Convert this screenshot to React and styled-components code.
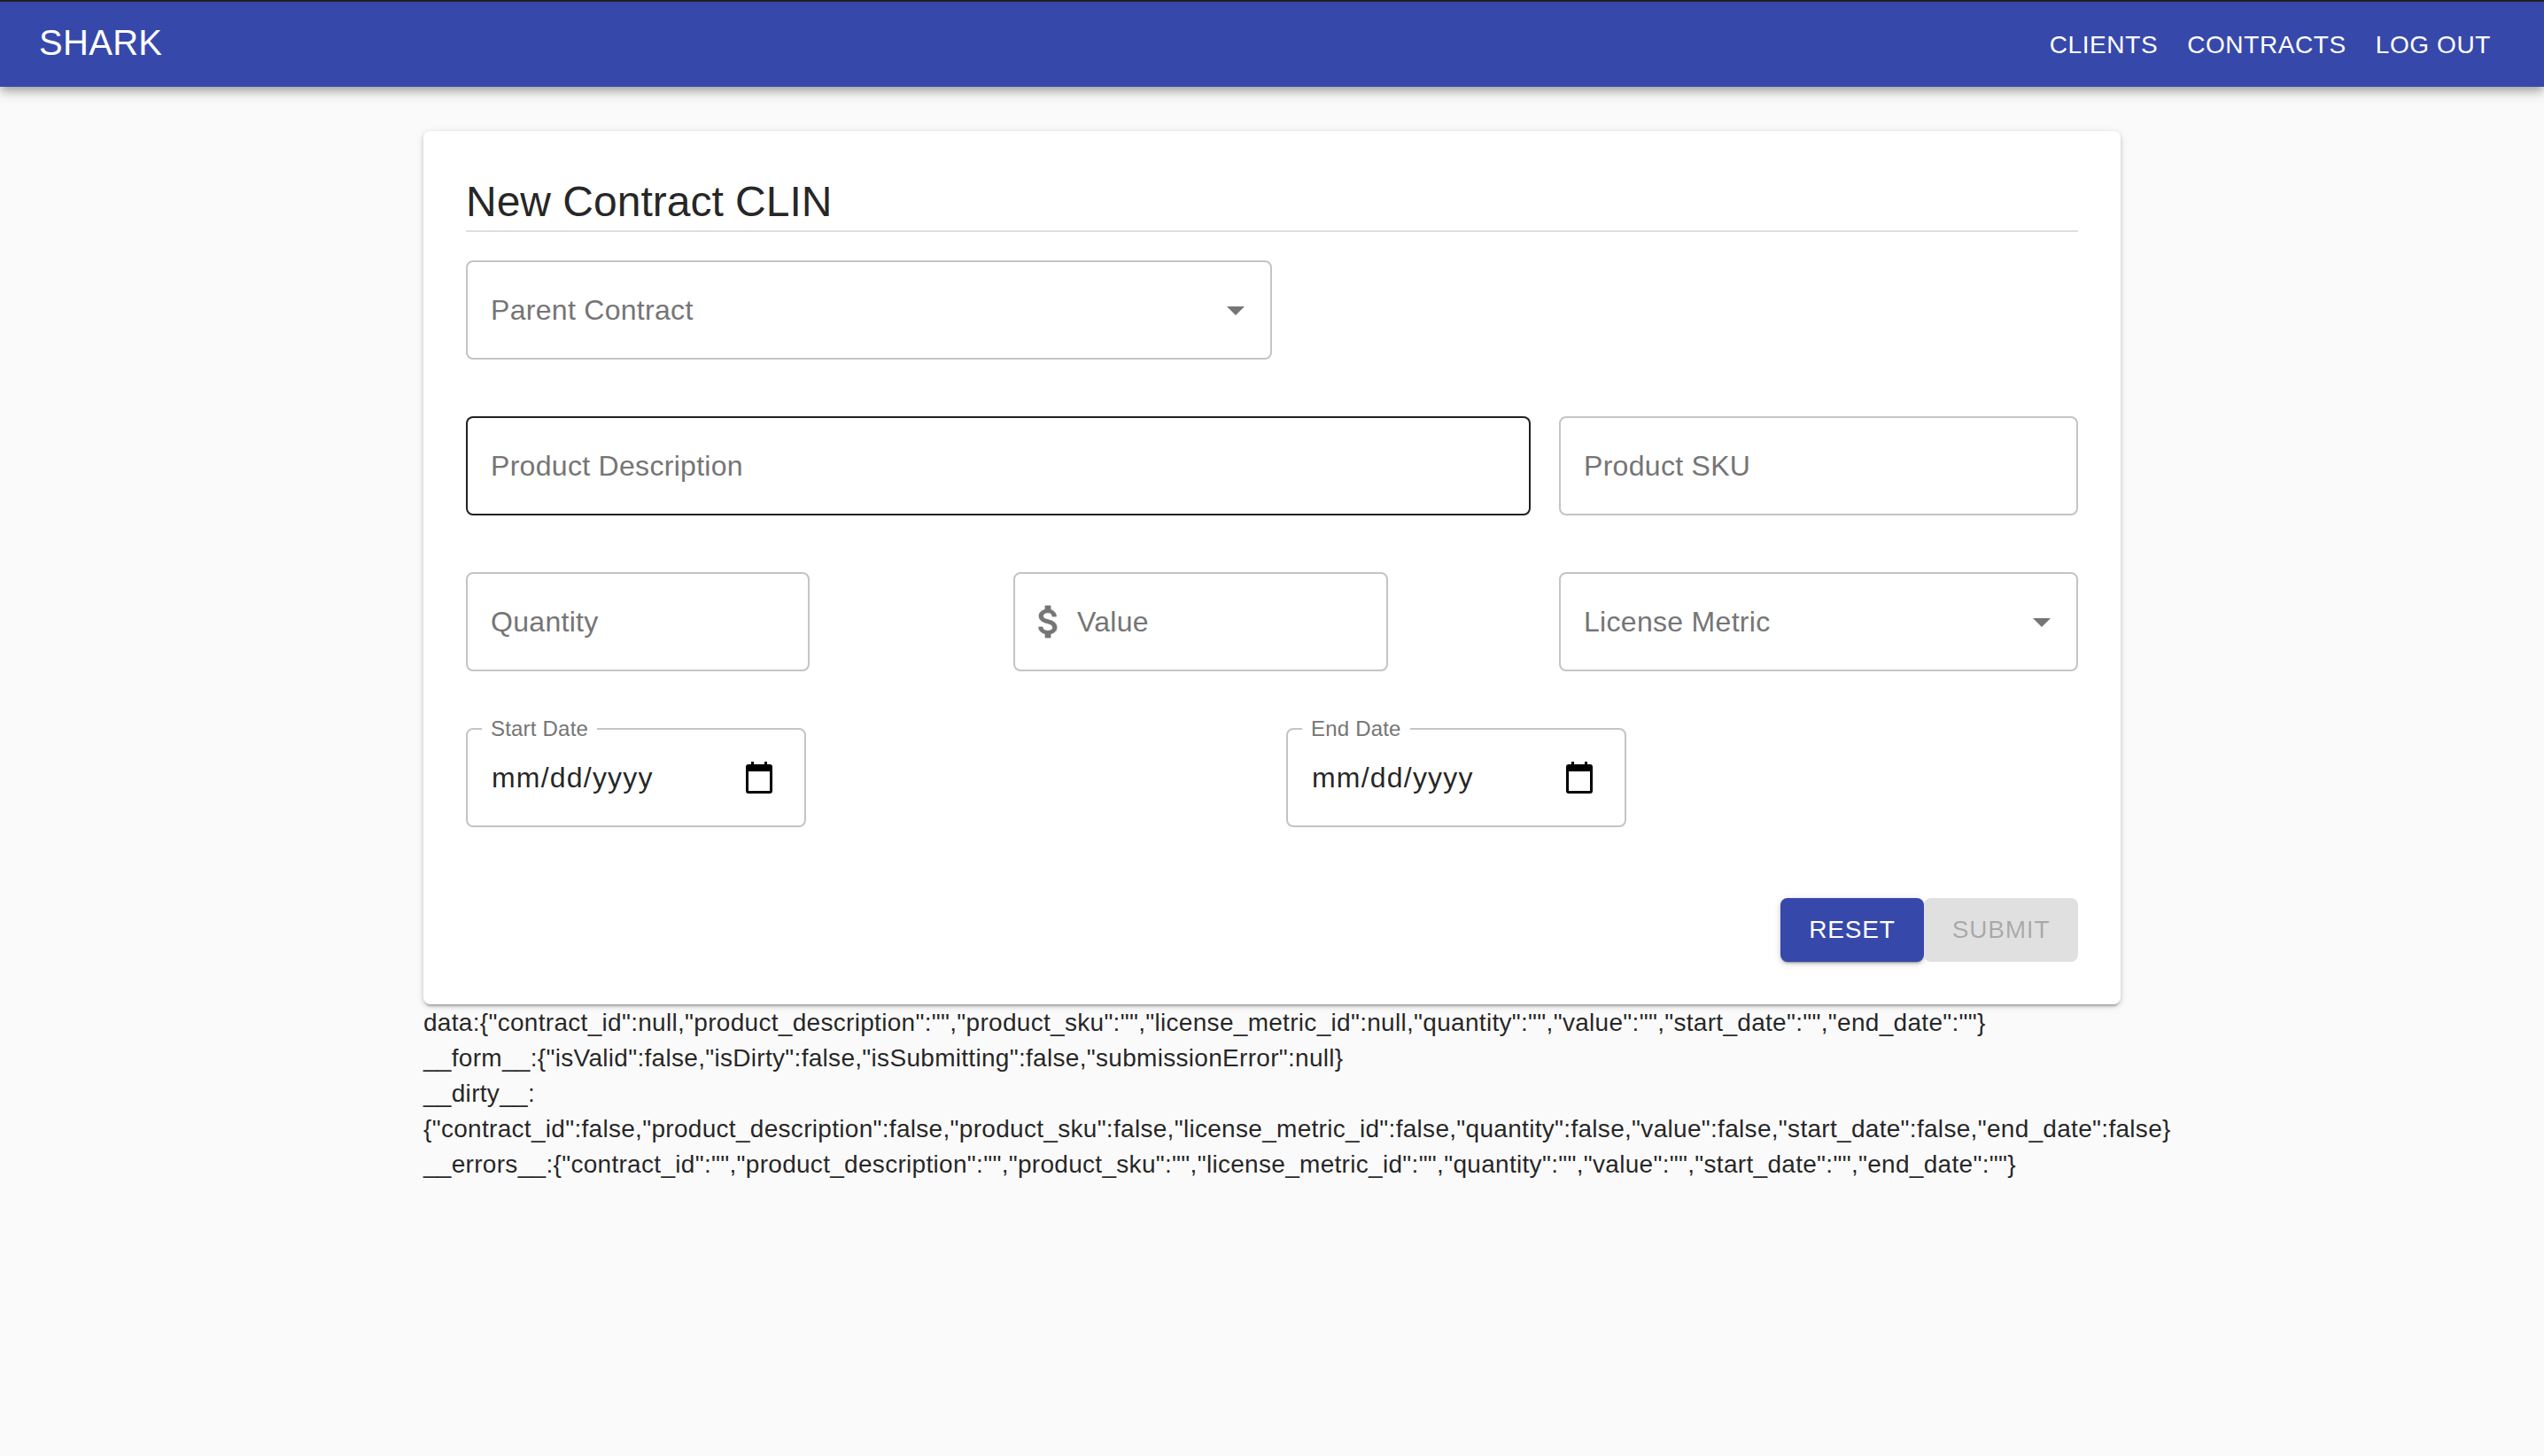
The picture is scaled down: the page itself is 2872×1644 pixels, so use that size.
import React from 'react';
import styled, { createGlobalStyle } from 'styled-components';

const GlobalStyle = createGlobalStyle`
    html, body {
        margin: 0;
        padding: 0;
        background: #fafafa;
    }

    body {
        font-family: "Liberation Sans", Arial, sans-serif;
        color: rgba(0, 0, 0, .87);
    }
`;

const Page = styled.div`
    width: 2872px;
    height: 1644px;
    overflow: hidden;
    display: flex;
    flex-direction: column;
    box-sizing: border-box;
    border-top: 2px solid #212121;
`;

const AppBar = styled.header`
    height: 96px;
    flex-shrink: 0;
    display: flex;
    align-items: center;
    justify-content: space-between;
    padding: 0 60px 0 44px;
    background: #3748ab;
    color: #fff;
    box-shadow: 0 4px 8px -2px rgba(0, 0, 0, .2), 0 8px 10px 0 rgba(0, 0, 0, .14), 0 2px 20px 0 rgba(0, 0, 0, .12);
    position: relative;
    z-index: 1;
`;

const Brand = styled.div`
    font-size: 40px;
    line-height: 1.6;
    letter-spacing: .3px;
    margin-bottom: 4px;
`;

const Nav = styled.nav`
    display: flex;
    gap: 33px;
    margin-top: 2px;
`;

const NavLink = styled.span`
    font-size: 28px;
    letter-spacing: .6px;
`;

const Main = styled.main`
    width: 1916px;
    margin: 50px 0 0 478px;
`;

const Card = styled.section`
    box-sizing: border-box;
    height: 986px;
    padding: 48px 48px;
    background: #fff;
    border-radius: 8px;
    box-shadow: 0 4px 2px -2px rgba(0, 0, 0, .2), 0 2px 4px 0 rgba(0, 0, 0, .14), 0 2px 10px 0 rgba(0, 0, 0, .12);
`;

const Title = styled.h1`
    margin: 0;
    height: 64px;
    border-bottom: 2px solid #dedede;
    font-size: 48px;
    font-weight: 400;
    line-height: 64px;
    color: rgba(0, 0, 0, .87);
`;

const Row = styled.div`
    display: grid;
    grid-template-columns: ${p => p.$columns};
    margin-top: ${p => p.$top}px;
`;

const Field = styled.div`
    position: relative;
    box-sizing: border-box;
    width: ${p => p.$width}px;
    height: 112px;
    display: flex;
    align-items: center;
    padding: 0 26px;
    background: #fff;
    border: 2px solid ${p => (p.$active ? 'rgba(0, 0, 0, .87)' : '#c4c4c4')};
    border-radius: 8px;
`;

const Placeholder = styled.span`
    font-size: 32px;
    letter-spacing: .3px;
    color: #757575;
`;

const Caret = styled.svg`
    position: absolute;
    right: 15px;
    top: 30px;
    width: 48px;
    height: 48px;
    fill: #757575;
`;

const MoneyIcon = styled.svg`
    width: 48px;
    height: 48px;
    margin: 0 8px 0 -12px;
    flex-shrink: 0;
    fill: #757575;
    stroke: #757575;
    stroke-width: .4;
`;

const FloatLabel = styled.label`
    position: absolute;
    left: 16px;
    top: -15px;
    padding: 0 10px;
    background: #fff;
    font-size: 24px;
    line-height: 28px;
    letter-spacing: .2px;
    color: #757575;
`;

const DateText = styled.span`
    flex: 1;
    margin-left: 1px;
    font-size: 32px;
    letter-spacing: 1.2px;
    color: rgba(0, 0, 0, .87);
`;

const CalendarIcon = styled.svg`
    width: 32px;
    height: 36px;
    margin-right: 9px;
    flex-shrink: 0;
`;

const Actions = styled.div`
    display: flex;
    justify-content: flex-end;
    margin-top: 80px;
`;

const Button = styled.button`
    height: 72px;
    width: ${p => p.$width}px;
    padding: 0;
    border: 0;
    border-radius: 8px;
    font-family: inherit;
    font-size: 28px;
    letter-spacing: .8px;
    background: ${p => (p.disabled ? '#e0e0e0' : '#3748ab')};
    color: ${p => (p.disabled ? 'rgba(0, 0, 0, .26)' : '#fff')};
    box-shadow: ${p => (p.disabled ? 'none' : '0 3px 2px -2px rgba(0, 0, 0, .3), 0 2px 4px 0 rgba(0, 0, 0, .14), 0 2px 10px 0 rgba(0, 0, 0, .12)')};
    position: relative;
`;

const Debug = styled.div`
    margin-top: 1px;
    font-size: 28px;
    line-height: 40px;
    letter-spacing: .3px;
    color: rgba(0, 0, 0, .87);
`;

const DebugLine = styled.div`
    white-space: nowrap;
`;

const DateField = ({ label, width }) => (
    <Field $width={width}>
        <FloatLabel>{label}</FloatLabel>
        <DateText>mm/dd/yyyy</DateText>
        <CalendarIcon viewBox="0 0 32 36">
            <path d="M7 0h3v3h12V0h3v3h3a3 3 0 0 1 3 3v27a3 3 0 0 1-3 3H4a3 3 0 0 1-3-3V6a3 3 0 0 1 3-3h3zM4 11v22h24V11z" fill="#000" />
        </CalendarIcon>
    </Field>
);

const SelectField = ({ label, width }) => (
    <Field $width={width}>
        <Placeholder>{label}</Placeholder>
        <Caret viewBox="0 0 24 24">
            <path d="M7 10l5 5 5-5z" />
        </Caret>
    </Field>
);

export default function App() {
    return (
        <Page>
            <GlobalStyle />
            <AppBar>
                <Brand>SHARK</Brand>
                <Nav>
                    <NavLink>CLIENTS</NavLink>
                    <NavLink>CONTRACTS</NavLink>
                    <NavLink>LOG OUT</NavLink>
                </Nav>
            </AppBar>

            <Main>
                <Card>
                    <Title>New Contract CLIN</Title>

                    <Row $columns="1fr" $top={32}>
                        <SelectField label="Parent Contract" width={910} />
                    </Row>

                    <Row $columns="1234px 586px" $top={64}>
                        <Field $width={1202} $active>
                            <Placeholder>Product Description</Placeholder>
                        </Field>
                        <Field $width={586}>
                            <Placeholder>Product SKU</Placeholder>
                        </Field>
                    </Row>

                    <Row $columns="618px 616px 586px" $top={64}>
                        <Field $width={388}>
                            <Placeholder>Quantity</Placeholder>
                        </Field>
                        <Field $width={423}>
                            <MoneyIcon viewBox="0 0 24 24">
                                <path d="M11.8 10.9c-2.27-.59-3-1.2-3-2.15 0-1.09 1.01-1.85 2.7-1.85 1.78 0 2.44.85 2.5 2.1h2.21c-.07-1.72-1.12-3.3-3.21-3.81V3h-3v2.16c-1.94.42-3.5 1.68-3.5 3.61 0 2.31 1.91 3.46 4.7 4.13 2.5.6 3 1.48 3 2.41 0 .69-.49 1.79-2.7 1.79-2.06 0-2.87-.92-2.98-2.1h-2.2c.12 2.19 1.76 3.42 3.68 3.83V21h3v-2.15c1.95-.37 3.5-1.5 3.5-3.55 0-2.84-2.43-3.81-4.7-4.4z" />
                            </MoneyIcon>
                            <Placeholder>Value</Placeholder>
                        </Field>
                        <SelectField label="License Metric" width={586} />
                    </Row>

                    <Row $columns="926px 894px" $top={64}>
                        <DateField label="Start Date" width={384} />
                        <DateField label="End Date" width={384} />
                    </Row>

                    <Actions>
                        <Button $width={162}>RESET</Button>
                        <Button $width={174} disabled>SUBMIT</Button>
                    </Actions>
                </Card>

                <Debug>
                    <DebugLine>{'data:{"contract_id":null,"product_description":"","product_sku":"","license_metric_id":null,"quantity":"","value":"","start_date":"","end_date":""}'}</DebugLine>
                    <DebugLine>{'__form__:{"isValid":false,"isDirty":false,"isSubmitting":false,"submissionError":null}'}</DebugLine>
                    <DebugLine>{'__dirty__:'}</DebugLine>
                    <DebugLine>{'{"contract_id":false,"product_description":false,"product_sku":false,"license_metric_id":false,"quantity":false,"value":false,"start_date":false,"end_date":false}'}</DebugLine>
                    <DebugLine>{'__errors__:{"contract_id":"","product_description":"","product_sku":"","license_metric_id":"","quantity":"","value":"","start_date":"","end_date":""}'}</DebugLine>
                </Debug>
            </Main>
        </Page>
    );
}
